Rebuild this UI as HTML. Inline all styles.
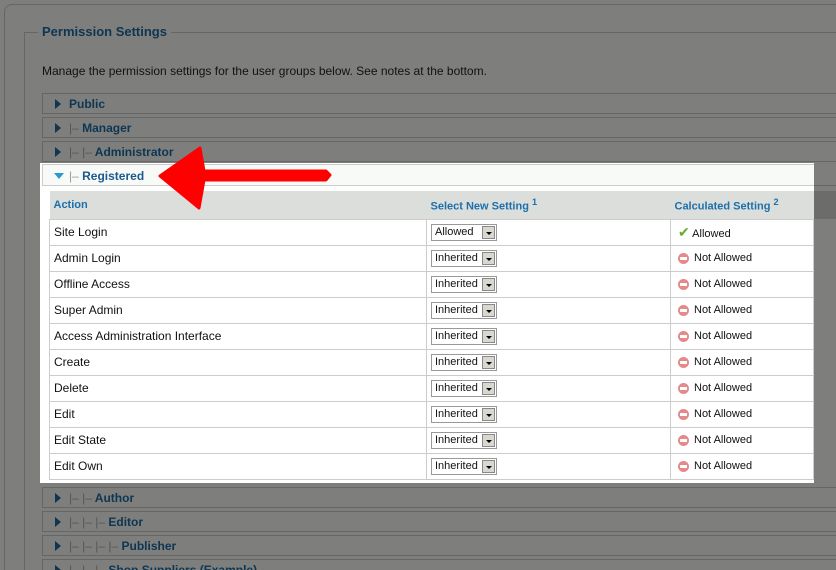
<!DOCTYPE html><html><head><style>
*{margin:0;padding:0;box-sizing:border-box}
html,body{width:836px;height:570px;overflow:hidden}
body{background:#7e7f7c;font-family:"Liberation Sans",Arial,sans-serif;font-size:12px;position:relative}
.a{position:absolute}
.outer{left:4px;top:4px;width:840px;height:580px;border:1px solid #666;border-radius:8px}
.fs{left:24px;top:32px;width:820px;height:560px;border:1px solid #666}
.leg{left:38px;top:24px;background:#7e7f7c;padding:0 4px;color:#0e3552;font-size:13px;font-weight:bold}
.g{left:42px;width:820px;height:21px;border:1px solid #666;color:#0e3552;font-weight:bold;padding:3px 0 0 26px}
.g:before{content:"";position:absolute;left:12px;top:5px;border-left:6px solid #0e3552;border-top:5px solid transparent;border-bottom:5px solid transparent}
.p{color:#555;font-weight:normal}
.box{left:40px;top:163px;width:774px;height:320px;background:#fff}
table{border-collapse:collapse;position:absolute;left:49px;top:191px;width:765px}
th{background:#dcdedb;color:#1b70ad;text-align:left;height:28px;padding:0 4px;font-size:11px}
td{border:1px solid #ccc;height:26px;padding:0 4px;font-size:12px;color:#111}
.sel{display:inline-block;width:66px;height:17px;border:1px solid #999;position:relative;font-size:11px;padding:1px 0 0 3px;vertical-align:middle}
.sel b{position:absolute;right:1px;top:1px;width:13px;height:13px;background:#d8d8d0;border:1px solid #888}
.sel b:after{content:"";position:absolute;left:3px;top:5px;border-top:3px solid #000;border-left:3px solid transparent;border-right:3px solid transparent}
.no{display:inline-block;width:11px;height:11px;border-radius:50%;background:#e58a8a;position:relative;vertical-align:middle;margin-right:5px;margin-left:3px}
.no:after{content:"";position:absolute;left:2px;top:4px;width:7px;height:3px;background:#fff}
td:nth-child(3){font-size:11px}
</style></head><body>
<div class="a outer"></div>
<div class="a fs"></div>
<div class="a leg">Permission Settings</div>
<div class="a" style="left:42px;top:64px;color:#111">Manage the permission settings for the user groups below. See notes at the bottom.</div>
<div class="a g" style="top:93px">Public</div>
<div class="a g" style="top:117px"><span class="p">|–</span> Manager</div>
<div class="a g" style="top:141px"><span class="p">|– |–</span> Administrator</div>
<div class="a g" style="top:487px"><span class="p">|– |–</span> Author</div>
<div class="a g" style="top:511px"><span class="p">|– |– |–</span> Editor</div>
<div class="a g" style="top:535px"><span class="p">|– |– |– |–</span> Publisher</div>
<div class="a g" style="top:559px"><span class="p">|– |– |–</span> Shop Suppliers (Example)</div>
<div class="a" style="left:814px;top:191px;width:22px;height:28px;background:#6c6d6b"></div>
<div class="a" style="left:814px;top:185px;width:22px;height:1px;background:#666"></div>
<div class="a box"></div>
<div class="a" style="left:42px;top:164px;width:772px;height:22px;border:1px solid #ccc;border-right:none;background:#f8faf8;color:#1a5a8c;font-weight:bold;padding:4px 0 0 26px"><span style="color:#999;font-weight:normal">|–</span> Registered</div>
<div class="a" style="left:54px;top:173px;border-top:6px solid #2a9ad0;border-left:5px solid transparent;border-right:5px solid transparent"></div>
<table>
<tr><th style="width:377px">Action</th><th style="width:244px">Select New Setting <sup>1</sup></th><th>Calculated Setting <sup>2</sup></th></tr>
<tr><td>Site Login</td><td><span class="sel">Allowed<b></b></span></td><td><span style="color:#6a3;font-size:14px;margin-left:3px">✔</span> Allowed</td></tr>
<tr><td>Admin Login</td><td><span class="sel">Inherited<b></b></span></td><td><span class="no"></span>Not Allowed</td></tr>
<tr><td>Offline Access</td><td><span class="sel">Inherited<b></b></span></td><td><span class="no"></span>Not Allowed</td></tr>
<tr><td>Super Admin</td><td><span class="sel">Inherited<b></b></span></td><td><span class="no"></span>Not Allowed</td></tr>
<tr><td>Access Administration Interface</td><td><span class="sel">Inherited<b></b></span></td><td><span class="no"></span>Not Allowed</td></tr>
<tr><td>Create</td><td><span class="sel">Inherited<b></b></span></td><td><span class="no"></span>Not Allowed</td></tr>
<tr><td>Delete</td><td><span class="sel">Inherited<b></b></span></td><td><span class="no"></span>Not Allowed</td></tr>
<tr><td>Edit</td><td><span class="sel">Inherited<b></b></span></td><td><span class="no"></span>Not Allowed</td></tr>
<tr><td>Edit State</td><td><span class="sel">Inherited<b></b></span></td><td><span class="no"></span>Not Allowed</td></tr>
<tr><td>Edit Own</td><td><span class="sel">Inherited<b></b></span></td><td><span class="no"></span>Not Allowed</td></tr>
</table>
<svg class="a" style="left:0;top:0" width="836" height="570"><polygon points="160,176 200,148 204,171 326,171 330,175 326,180 204,180 199,208" fill="#f00" stroke="#f00" stroke-width="3" stroke-linejoin="round"/></svg>
</body></html>
